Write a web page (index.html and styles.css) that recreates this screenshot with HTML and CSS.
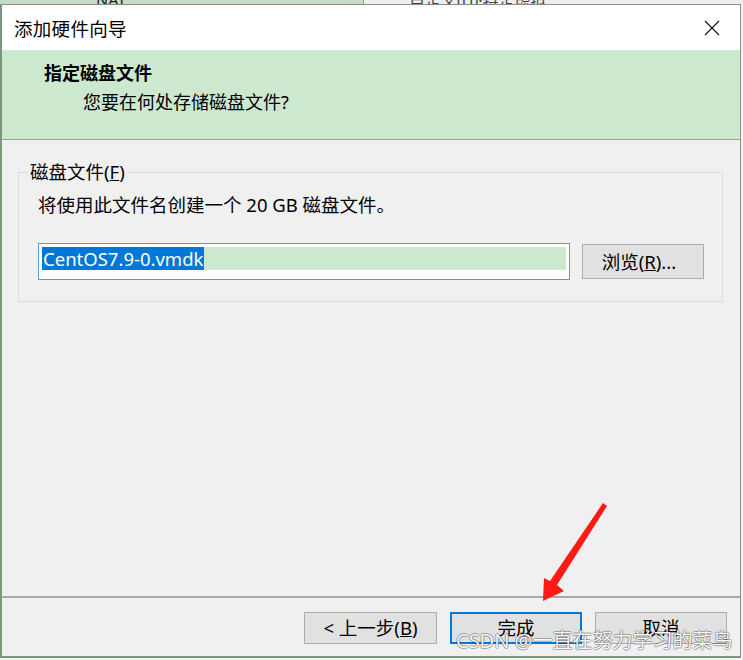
FILE: index.html
```html
<!DOCTYPE html>
<html lang="zh-CN">
<head>
<meta charset="utf-8">
<title>添加硬件向导</title>
<link rel="stylesheet" href="styles.css">
</head>
<body>
<div class="backdrop">
  <div class="bd-left"><span class="bd-text">NAT</span></div>
  <div class="bd-right"><span class="bd-text2">自定义(U)·特定虚拟</span></div>
</div>
<div class="window">
  <div class="titlebar">
    <span class="title">添加硬件向导</span>
    <svg class="close" width="16" height="16" viewBox="0 0 16 16"><path d="M1 1L15 15M15 1L1 15" stroke="#1a1a1a" stroke-width="1.3" fill="none"/></svg>
  </div>
  <div class="header">
    <div class="h-title">指定磁盘文件</div>
    <div class="h-sub">您要在何处存储磁盘文件?</div>
  </div>
  <div class="content">
    <fieldset class="group">
      <legend>磁盘文件(<u>F</u>)</legend>
      <div class="desc">将使用此文件名创建一个 20 GB 磁盘文件。</div>
      <div class="row">
        <div class="input"><div class="line"><span class="sel">CentOS7.9-0.vmdk</span></div></div>
        <button class="btn browse">浏览(<u>R</u>)...</button>
      </div>
    </fieldset>
  </div>
  <div class="footer">
    <button class="btn">&lt; 上一步(<u>B</u>)</button>
    <button class="btn default">完成</button>
    <button class="btn">取消</button>
  </div>
</div>
<div class="watermark">CSDN @一直在努力学习的菜鸟</div>
<svg class="arrow" width="743" height="660" viewBox="0 0 743 660"><polygon points="603,503 607,506 557,585 564,591 543,601 544,578 550,581" fill="#ff1a14"/></svg>
</body>
</html>
```
FILE: styles.css
```css
html, body {
  margin: 0;
  padding: 0;
}
body {
  width: 743px;
  height: 660px;
  overflow: hidden;
  background: #f4f4f4;
  font-family: "Noto Sans", "Noto Sans CJK SC", sans-serif;
  color: #000;
  position: relative;
}
.backdrop {
  height: 4px;
  display: flex;
  overflow: hidden;
}
.bd-left {
  width: 363px;
  background: #c8dcc7;
  border-right: 1px solid #9a9a9a;
  position: relative;
}
.bd-right {
  flex: 1;
  background: #efefef;
  position: relative;
}
.bd-text {
  position: absolute;
  left: 96px;
  top: -11px;
  font-size: 16px;
  color: #222;
}
.bd-text2 {
  position: absolute;
  left: 45px;
  top: -12px;
  font-size: 16px;
  color: #444;
}
.window {
  height: 654px;
  box-sizing: border-box;
  width: 741px;
  border: 1px solid #8c8c8c;
  border-left: 2px solid #7f967e;
  border-bottom: 2px solid #7f967e;
  background: #f0f0f0;
  display: flex;
  flex-direction: column;
}
.titlebar {
  height: 45px;
  flex: none;
  background: #fff;
  display: flex;
  align-items: center;
  justify-content: space-between;
  padding: 0 20px 0 12px;
}
.title {
  font-size: 18.5px;
  letter-spacing: 0.3px;
}
.close {
  display: block;
}
.header {
  flex: none;
  background: #cce8cf;
  border-bottom: 1px solid #a0a0a0;
  box-sizing: border-box;
  height: 90px;
  padding: 10px 0 0 42px;
}
.h-title {
  font-size: 18px;
  font-weight: bold;
  line-height: 26px;
}
.h-sub {
  font-size: 18px;
  line-height: 26px;
  margin-top: 3px;
  padding-left: 39px;
}
.content {
  flex: 1;
  padding: 20px 17px 0 16px;
  border-bottom: 2px solid #a9a9a9;
}
.group {
  margin: 0;
  border: 1px solid #dcdcdc;
  padding: 0 17px 21px 19px;
}
.group legend {
  font-size: 18.5px;
  line-height: 24px;
  padding: 0 2px;
  margin-left: -10px;
}
.desc {
  font-size: 18.5px;
  line-height: 24px;
  margin-top: 9px;
}
.row {
  display: flex;
  align-items: center;
  gap: 12px;
  margin-top: 26px;
}
.input {
  width: 532px;
  height: 37px;
  box-sizing: border-box;
  border: 1px solid #5b9bdb;
  background: #fff;
  padding: 3px;
}
.line {
  height: 23px;
  background: #cce8cf;
  display: flex;
  align-items: center;
}
.sel {
  background: #0078d7;
  color: #fff;
  font-size: 18.5px;
  line-height: 23px;
  padding: 0 1px;
}
.btn {
  font-family: "Noto Sans", "Noto Sans CJK SC", sans-serif;
  font-size: 18.5px;
  background: #e1e1e1;
  border: 1px solid #adadad;
  color: #000;
  padding: 0;
  margin: 0;
  width: 132px;
  height: 32px;
  line-height: 28px;
}
.browse {
  width: 122px;
  height: 35px;
  padding-right: 8px;
}
.footer {
  height: 58px;
  flex: none;
  box-sizing: border-box;
  display: flex;
  justify-content: flex-end;
  gap: 13px;
  padding: 14px 13px 0 0;
}
.footer .btn:first-child {
  width: 133px;
}
.default {
  border: 2px solid #0078d7;
}
.watermark {
  position: absolute;
  left: 456px;
  top: 627px;
  font-size: 20px;
  line-height: 28px;
  color: #f8f8f8;
  text-shadow: 1px 0 rgba(0, 0, 0, 0.3), -1px 0 rgba(0, 0, 0, 0.3), 0 1px rgba(0, 0, 0, 0.3), 0 -1px rgba(0, 0, 0, 0.3);
  white-space: nowrap;
}
.arrow {
  position: absolute;
  left: 0;
  top: 0;
}
```
